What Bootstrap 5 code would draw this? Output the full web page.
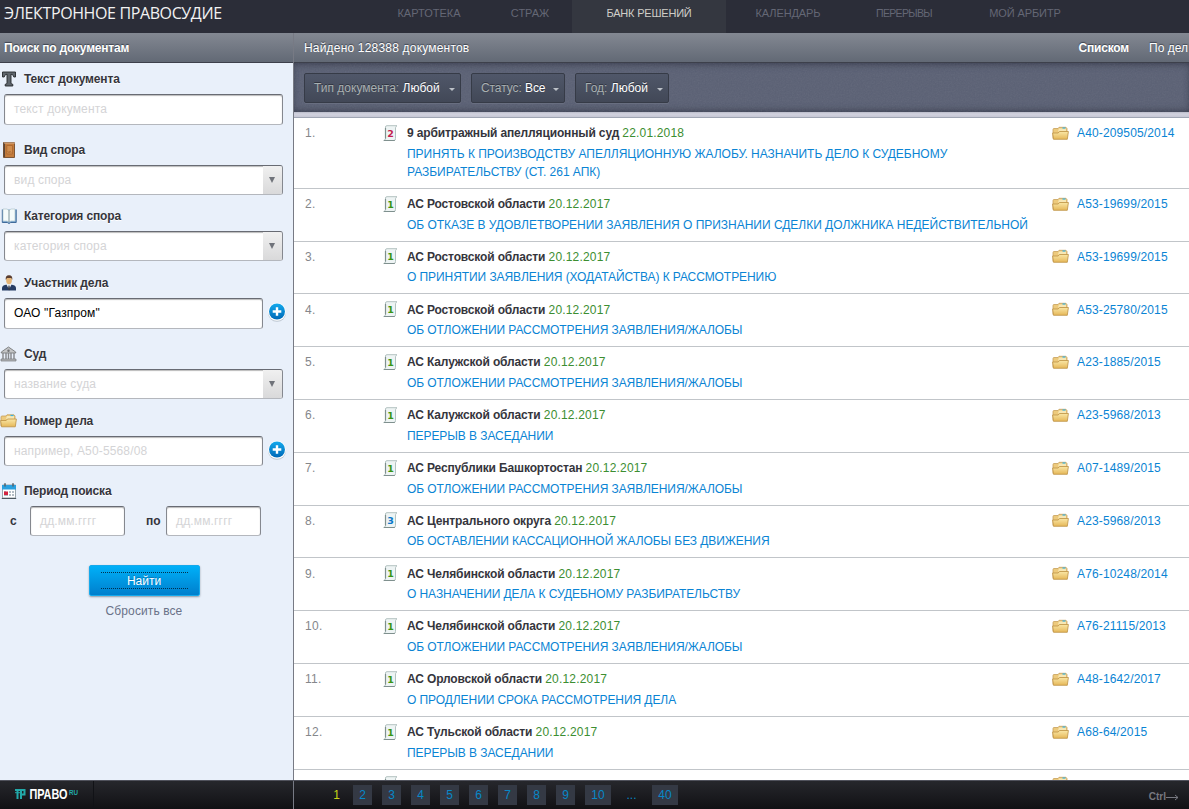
<!DOCTYPE html>
<html lang="ru">
<head>
<meta charset="utf-8">
<title>Электронное правосудие</title>
<link href="https://cdn.jsdelivr.net/npm/bootstrap@5.3.0/dist/css/bootstrap.min.css" rel="stylesheet">
<style>
html,body{height:100%;overflow:hidden}
body{font:12px/18px "Liberation Sans",Arial,sans-serif;color:#35353c;background:#fff}
a{text-decoration:none;color:#0a84d4}
.defs{position:absolute;width:0;height:0}
.topbar{height:33px;background:#2b2d38}
.site-title{width:362px;padding-left:4px;font:16px/26px "Open Sans",sans-serif;color:#f2f2f2;white-space:nowrap;letter-spacing:-.38px}
.topnav a{display:block;height:33px;line-height:27px;font-size:11px;color:#646775;text-align:center}
.topnav a.current{background:#343740;color:#cfcec8}
.n1{width:134px}
.n2{width:76px;padding-right:8px}
.n3{width:154px;letter-spacing:-.2px}
.n4{width:124px;letter-spacing:-.1px}
.topnav .n5{width:108px;font-size:10.5px;letter-spacing:-.65px}
.n6{width:134px;letter-spacing:-.1px}
.strip{height:30px;background:linear-gradient(#838892,#626975);border-bottom:1px solid #3d404b;line-height:30px;color:#fff;text-shadow:0 -1px 1px #3d4350;white-space:nowrap}
.side{width:294px;background:#e9f0fa;border-right:1px solid #777a84}
.side .strip{letter-spacing:-.2px}
.caption{height:31px;font-weight:bold;text-shadow:0 1px 0 #fff;letter-spacing:-.15px}
.caption svg{width:17px;height:16px;margin-right:7px;flex:none}
.h71{height:71px}.h67{height:67px}.h66{height:66px}.h70{height:70px}
.box{height:30px;border:1px solid #b4b7bd;border-top-color:#686b73;border-left-color:#85888f;border-right-color:#85888f;border-radius:3px;background:#fff;box-shadow:inset 0 1px 1px #bbb;color:#d4d4d6;line-height:28px;padding-left:9px;white-space:nowrap;overflow:hidden;letter-spacing:.15px}
.box.tall{height:31px;line-height:29px}
.full{width:279px}.short{width:259px}.date{width:95px}
.box.entered{color:#000}
.drop{width:19px;height:100%;background:linear-gradient(#f0f0f0,#d9d9da)}
.drop:after{content:"";border:3.5px solid transparent;border-top:6px solid #70737a;border-bottom:0;margin-right:2px}
.lab-from{width:26px;padding-left:6px}.lab-to{width:41px;padding-left:21px}
.actions{padding-top:29px;padding-right:5px}
.find{width:111px;height:31px;border:1px solid #15a9ec;border-radius:2px;background:linear-gradient(#00b0f8,#007fcd);box-shadow:0 1px 2px #8d98a4;color:#fff;padding:6px 11px;line-height:14px}
.find span{display:block;height:17px;border-top:1px dotted #00324f;border-bottom:1px dotted #00324f;text-align:center;line-height:16px;text-shadow:0 -1px 0 #0878b5}
.reset-link{color:#6a7288;letter-spacing:.1px;margin-top:6px}
.found-count{padding-left:10px;letter-spacing:.19px}
.by-case{width:40px;margin-left:20px}
.by-list{letter-spacing:-.2px}
.filters{height:49px;background:#5a6074;box-shadow:inset 0 4px 7px -3px #35394a,inset 0 -4px 7px -3px #35394a;padding:10px 10px 0;isolation:isolate;position:relative}
.grain{position:absolute;inset:0;width:100%;height:100%;z-index:-1;opacity:.09}
.pick{height:30px;border:1px solid #363b47;border-radius:2px;background:linear-gradient(#505769,#424857);box-shadow:0 1px 0 #686e80;color:#a9b0b1;line-height:28px;padding:0 5px 0 9px;white-space:nowrap;text-shadow:0 -1px 0 #303440}
.pick b{font-weight:normal;color:#fff}
.pick:after{content:"";border:3px solid transparent;border-top:3px solid #bcc1c8;border-bottom:0;margin-top:2px}
.p1{width:157px;margin-right:10px}.p2{width:94px;margin-right:10px;letter-spacing:-.08px}.p3{width:94px}
.ledge{height:6px;background:linear-gradient(#b9bcc9,#d2d3df 40%,#c6c7d4);border-bottom:1px solid #9fa5b3}
.entry{height:52.8px;border-bottom:1px solid #c1c5c9;padding:6.2px 0 0 11px}
.entry:first-child{height:70.9px}
.num{width:78px;color:#85878b;letter-spacing:.3px}
.sheet{width:24px}
.sheet svg{display:block;margin-top:.6px}
.info{width:645px}
.court{font-weight:bold;white-space:nowrap;letter-spacing:-.14px}
.court span{font-weight:normal;color:#3c8e31;letter-spacing:.18px}
.ruling{display:block;margin-top:2.5px;white-space:nowrap;letter-spacing:-.07px}
.entry:first-child .ruling,.entry:nth-child(2) .ruling{letter-spacing:-.02px}
.dossier{letter-spacing:.14px}
.dossier svg{width:17px;height:15px;margin-right:8px;display:block}
.bottom{height:29px;background:linear-gradient(#26272c,#111114);border-top:1px solid #50525c}
.brand-cell{width:94px;border-right:1px solid #111216;padding-left:14px}
.foot-gap{width:200px;border-right:1px solid #777a84}
.pager{gap:10px;padding-left:30px}
.pager a{height:20px;min-width:19px;padding:0 5.5px;background:#343944;color:#0788c8;line-height:20px;text-align:center}
.pager a.wide{width:26px}
.pager .bare{background:none}
.pager .more{width:21px}
.pager .on{color:#c7d418;padding:0 2px 0 8px}
.next-key{font-size:10px;font-weight:bold;color:#777880;line-height:31px;padding-right:10px}
</style>
</head>
<body class="d-flex flex-column">
<svg class="defs">
<defs>
<linearGradient id="gold" x2="0" y2="1"><stop stop-color="#fae7a6"/><stop offset="1" stop-color="#e5b758"/></linearGradient>
<linearGradient id="plusFill" x2="0" y2="1"><stop stop-color="#13a9ed"/><stop offset="1" stop-color="#0069b7"/></linearGradient>
</defs>
<symbol id="folder" viewBox="0 0 17 15"><path d="M1 12.500V3.500Q1 2.500 2 2.500h4l1-1.200H14l1 1.200v5" fill="#edca7c" stroke="#c6a05a" stroke-width=".8"/><path d="M7 2.500h7v3H6z" fill="#f7e7b4"/><path d="M10.500 2h3" stroke="#35b3e8" stroke-width="1.200"/><path d="M.6 7h5.600l1.300-1.500h8.900L15.300 13.300H1.500z" fill="url(#gold)" stroke="#bd9142" stroke-width=".8"/></symbol>
<symbol id="page" viewBox="0 0 15 17"><path d="M2.500 14V2Q2.500.7 4 .7h10q-1 .5-1.500 2v10.800q0 2-1.500 2H.8q1.700-.5 1.700-2" fill="#eef4f4" stroke="#b3c2c1"/><path d="M2.500 3v10.500M.8 15.500h11" stroke="#7f908e" fill="none" stroke-width="1.200"/></symbol>
<symbol id="plus" viewBox="0 0 20 20"><circle cx="10" cy="10.800" r="9" fill="#bcc6d0"/><circle cx="10" cy="9.800" r="9" fill="#fff"/><circle cx="10" cy="9.500" r="8" fill="url(#plusFill)"/><path d="M10 5.200v8.600M5.700 9.500h8.600" stroke="#fff" stroke-width="2.400"/></symbol>
</svg>

<header class="topbar d-flex flex-shrink-0">
  <div class="site-title">ЭЛЕКТРОННОЕ ПРАВОСУДИЕ</div>
  <nav class="topnav d-flex">
    <a class="n1" href="#">КАРТОТЕКА</a><a class="n2" href="#">СТРАЖ</a><a class="n3 current" href="#">БАНК РЕШЕНИЙ</a><a class="n4" href="#">КАЛЕНДАРЬ</a><a class="n5" href="#">ПЕРЕРЫВЫ</a><a class="n6" href="#">МОЙ АРБИТР</a>
  </nav>
</header>

<main class="d-flex flex-grow-1 overflow-hidden">
  <aside class="side flex-shrink-0">
    <div class="strip fw-bold ps-1">Поиск по документам</div>
    <div class="h71">
      <div class="caption d-flex align-items-center"><svg viewBox="0 0 17 16"><path d="M2.500 1h13v5h-1.700Q13.500 3.200 11 3.200V12q0 1.200 1.800 1.300V15H5.200v-1.700Q7 13.200 7 12V3.200Q4.500 3.200 4.200 6H2.500z" fill="#5f666c" stroke="#25282b" stroke-width=".9"/></svg>Текст документа</div>
      <div class="box tall full ms-1">текст документа</div>
    </div>
    <div class="h66">
      <div class="caption d-flex align-items-center"><svg viewBox="0 0 17 16"><path d="M3.500.5h11v15h-11z" fill="#c47c3c" stroke="#7e5636"/><path d="M4.300 1v14" stroke="#5d4637" stroke-width="1.500"/><path d="M6.800 3.500h5.700v8.500H6.800z" fill="#d18d4d" stroke="#a9642d" stroke-width=".8"/><path d="M8 9.500l1 1 1-1 1 1" fill="none" stroke="#8d4f22" stroke-width=".8"/><path d="M4 1h11" stroke="#d7b394"/></svg>Вид спора</div>
      <div class="box full ms-1 d-flex justify-content-between">вид спора<span class="drop d-flex align-items-center justify-content-center"></span></div>
    </div>
    <div class="h67">
      <div class="caption d-flex align-items-center"><svg viewBox="-1 0 17 16"><path d="M1.300 1.500v13h5l1.700 1 1.700-1h5.500v-13" fill="#79a6d0" stroke="#416b9a"/><path d="M2 1h4l2 1.300L10 1h4v12h-4l-2 1-2-1H2z" fill="#f5fbfb" stroke="#a9bfc7" stroke-width=".6"/><path d="M8 2v12" stroke="#7a9299"/></svg>Категория спора</div>
      <div class="box full ms-1 d-flex justify-content-between">категория спора<span class="drop d-flex align-items-center justify-content-center"></span></div>
    </div>
    <div class="h71">
      <div class="caption d-flex align-items-center"><svg viewBox="-1 0 17 16"><path d="M1 15.500v-3Q1.500 10 6 9.500h4q4.500.5 5 3v3z" fill="#263c64"/><path d="M5.500 9.500 8 14.500l2.500-5-1-2h-3z" fill="#edf0f3"/><path d="M7.500 10.500h1l.6 4L8 15.500 7 14z" fill="#343846"/><ellipse cx="8" cy="5" rx="2.900" ry="4.200" fill="#e5b577"/><path d="M4.800 5Q4 .3 8 .3T11.200 5L10.300 3H6z" fill="#593d31"/></svg>Участник дела</div>
      <div class="d-flex ps-1"><div class="box tall short entered">ОАО "Газпром"</div><svg width="20" height="20" class="ms-1 mt-1"><use href="#plus"/></svg></div>
    </div>
    <div class="h67">
      <div class="caption d-flex align-items-center"><svg viewBox="0 0 17 16"><path d="M1.300 6 8.500 1l7.200 5v1H1.300z" fill="#c4c5c6" stroke="#77797b" stroke-width=".9"/><circle cx="8.500" cy="4.800" r="1.200" fill="#707274"/><path d="M3 7v6M6 7v6M8.500 7v6M11 7v6M14 7v6" stroke="#85878a" stroke-width="1.400"/><path d="M1 13h15v2H1z" fill="#b4b6b8" stroke="#77797b" stroke-width=".7"/></svg>Суд</div>
      <div class="box full ms-1 d-flex justify-content-between">название суда<span class="drop d-flex align-items-center justify-content-center"></span></div>
    </div>
    <div class="h70">
      <div class="caption d-flex align-items-center"><svg><use href="#folder"/></svg>Номер дела</div>
      <div class="d-flex ps-1"><div class="box short">например, А50-5568/08</div><svg width="20" height="20" class="ms-1 mt-1"><use href="#plus"/></svg></div>
    </div>
    <div class="caption d-flex align-items-center"><svg viewBox="-1 0 17 16"><path d="M1.500 2h13v13h-13z" fill="#fff" stroke="#9aa6ae"/><path d="M.8 15.500h14.400" stroke="#4d5860"/><path d="M1 2h14v4.500H1z" fill="#2aa0df"/><path d="M4 .3v3.200M12 .3v3.200" stroke="#56656e" stroke-width="1.600"/><path d="M3 8h2v2H3zm5 0h2v2H8zm3 0h2v2h-2zM8 11h2v2H8zm3 0h2v2h-2zM3 12h4v1H3z" fill="#b4bdc5"/><path d="M3 8.500h4v3.500H3z" fill="#d32540"/></svg>Период поиска</div>
    <div class="d-flex fw-bold align-items-center ps-1"><span class="lab-from">с</span><div class="box date fw-normal">дд.мм.гггг</div><span class="lab-to">по</span><div class="box date fw-normal">дд.мм.гггг</div></div>
    <div class="actions d-flex flex-column align-items-center">
      <button class="find" type="button"><span>Найти</span></button>
      <a class="reset-link" href="#">Сбросить все</a>
    </div>
  </aside>
  <section class="flex-grow-1 overflow-hidden">
    <div class="strip d-flex"><span class="found-count">Найдено 128388 документов</span><b class="ms-auto by-list">Списком</b><span class="by-case">По дел</span></div>
    <div class="filters d-flex">
      <svg class="grain"><filter id="noise"><feTurbulence type="fractalNoise" baseFrequency=".7" numOctaves="2"/><feColorMatrix type="saturate" values="0"/></filter><rect width="100%" height="100%" filter="url(#noise)"/></svg>
      <div class="pick p1 d-flex align-items-center justify-content-between"><span>Тип документа: <b>Любой</b></span></div>
      <div class="pick p2 d-flex align-items-center justify-content-between"><span>Статус: <b>Все</b></span></div>
      <div class="pick p3 d-flex align-items-center justify-content-between"><span>Год: <b>Любой</b></span></div>
    </div>
    <div class="ledge"></div>
    <div id="entries"></div>
  </section>
</main>

<footer class="bottom d-flex flex-shrink-0">
  <div class="brand-cell d-flex align-items-center"><svg width="66" height="16" viewBox="0 0 66 16"><path d="M1 3h9.500v4.500H8M3.500 4v8M7 4v8" fill="none" stroke="#22a9a9" stroke-width="2"/><path d="M1 5.700h6" stroke="#22a9a9"/><text x="15.500" y="12" font-family="Liberation Sans" font-weight="bold" font-size="14" fill="#fff" textLength="38" lengthAdjust="spacingAndGlyphs">ПРАВО</text><text x="55" y="7.500" font-family="Liberation Sans" font-weight="bold" font-size="8" fill="#22a9a9" textLength="9" lengthAdjust="spacingAndGlyphs">RU</text></svg></div>
  <div class="foot-gap"></div>
  <nav class="pager d-flex pt-1"><a class="bare on" href="#">1</a><a href="#">2</a><a href="#">3</a><a href="#">4</a><a href="#">5</a><a href="#">6</a><a href="#">7</a><a href="#">8</a><a href="#">9</a><a class="wide" href="#">10</a><a class="bare more" href="#">...</a><a class="wide" href="#">40</a></nav>
  <div class="ms-auto next-key">Ctrl<svg width="13" height="7" viewBox="0 0 13 7"><path d="M0 3.500h12M9 1l3 2.500L9 6" fill="none" stroke="#777880"/></svg></div>
</footer>
<script>
const postponed = 'ОБ ОТЛОЖЕНИИ РАССМОТРЕНИЯ ЗАЯВЛЕНИЯ/ЖАЛОБЫ';
const rows = [
 [2,'9 арбитражный апелляционный суд','22.01.2018','ПРИНЯТЬ К ПРОИЗВОДСТВУ АПЕЛЛЯЦИОННУЮ ЖАЛОБУ. НАЗНАЧИТЬ ДЕЛО К СУДЕБНОМУ<br>РАЗБИРАТЕЛЬСТВУ (СТ. 261 АПК)','А40-209505/2014'],
 [1,'АС Ростовской области','20.12.2017','ОБ ОТКАЗЕ В УДОВЛЕТВОРЕНИИ ЗАЯВЛЕНИЯ О ПРИЗНАНИИ СДЕЛКИ ДОЛЖНИКА НЕДЕЙСТВИТЕЛЬНОЙ','А53-19699/2015'],
 [1,'АС Ростовской области','20.12.2017','О ПРИНЯТИИ ЗАЯВЛЕНИЯ (ХОДАТАЙСТВА) К РАССМОТРЕНИЮ','А53-19699/2015'],
 [1,'АС Ростовской области','20.12.2017',postponed,'А53-25780/2015'],
 [1,'АС Калужской области','20.12.2017',postponed,'А23-1885/2015'],
 [1,'АС Калужской области','20.12.2017','ПЕРЕРЫВ В ЗАСЕДАНИИ','А23-5968/2013'],
 [1,'АС Республики Башкортостан','20.12.2017',postponed,'А07-1489/2015'],
 [3,'АС Центрального округа','20.12.2017','ОБ ОСТАВЛЕНИИ КАССАЦИОННОЙ ЖАЛОБЫ БЕЗ ДВИЖЕНИЯ','А23-5968/2013'],
 [1,'АС Челябинской области','20.12.2017','О НАЗНАЧЕНИИ ДЕЛА К СУДЕБНОМУ РАЗБИРАТЕЛЬСТВУ','А76-10248/2014'],
 [1,'АС Челябинской области','20.12.2017',postponed,'А76-21115/2013'],
 [1,'АС Орловской области','20.12.2017','О ПРОДЛЕНИИ СРОКА РАССМОТРЕНИЯ ДЕЛА','А48-1642/2017'],
 [1,'АС Тульской области','20.12.2017','ПЕРЕРЫВ В ЗАСЕДАНИИ','А68-64/2015']
];
const tint = {1:'#3a9414',2:'#c41f50',3:'#0b78c9'};
const pageIcon = n => `<svg width="15" height="17"><use href="#page"/>${n ? `<text x="7.6" y="11.8" text-anchor="middle" font-family="DejaVu Sans" font-size="9.5" font-weight="bold" fill="${tint[n]}">${n}</text>` : ''}</svg>`;
document.getElementById('entries').innerHTML = rows.map((r,i)=>`<div class="entry d-flex align-items-start">
<div class="num">${i+1}.</div>
<div class="sheet">${pageIcon(r[0])}</div>
<div class="info"><div class="court">${r[1]} <span>${r[2]}</span></div><a class="ruling" href="#">${r[3]}</a></div>
<a class="dossier d-flex align-items-center" href="#"><svg><use href="#folder"/></svg>${r[4]}</a></div>`).join('')
 + `<div class="entry d-flex align-items-start"><div class="num"></div><div class="sheet">${pageIcon(0)}</div><div class="info"></div><svg width="17" height="15"><use href="#folder"/></svg></div>`;
</script>
<script src="https://cdn.jsdelivr.net/npm/bootstrap@5.3.0/dist/js/bootstrap.bundle.min.js"></script>
</body>
</html>
